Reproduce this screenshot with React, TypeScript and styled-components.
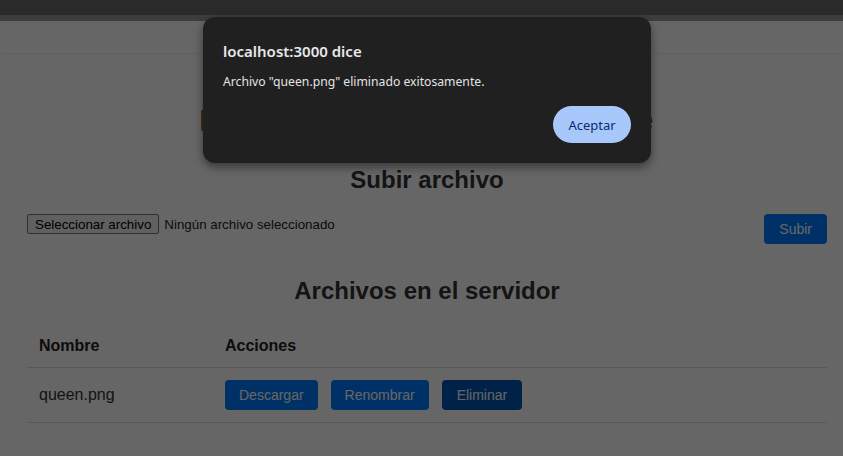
import React from "react";
import styled, { createGlobalStyle } from "styled-components";

const Global = createGlobalStyle`
  html, body { margin: 0; padding: 0; background: #ffffff; }
  body { font-family: "Liberation Sans", Arial, sans-serif; color: #333; }
  * { box-sizing: border-box; }
`;

const Chrome = styled.div`
  height: 15px;
  background: #2a2a2a;
`;

const ChromeEdge = styled.div`
  height: 6px;
  background: #3d3d3d;
`;

const Page = styled.div`
  position: relative;
  height: 435px;
  overflow: hidden;
  background: #ffffff;
`;

const TopStrip = styled.div`
  height: 32px;
  background: #ffffff;
  box-shadow: 0 1px 2px rgba(0, 0, 0, 0.06);
`;

const Container = styled.main`
  width: 800px;
  margin-left: 27px;
  display: flex;
  flex-direction: column;
`;

const Title = styled.h1`
  margin: 51px 0 0;
  height: 32px;
  display: flex;
  align-items: center;
  justify-content: center;
  gap: 10px;
  font-size: 29px;
  line-height: 32px;
  font-weight: 700;
  color: #2c3e50;
`;

const FolderIcon = () => (
  <svg width="28" height="24" viewBox="0 0 28 24" aria-hidden="true">
    <path d="M1 4a2 2 0 0 1 2-2h7l3 3h12a2 2 0 0 1 2 2v14a2 2 0 0 1-2 2H3a2 2 0 0 1-2-2z" fill="#d9a23a" stroke="#8a5a10" strokeWidth="1.5" />
  </svg>
);

const SectionTitle = styled.h2<{ $top: number }>`
  margin: ${(p) => p.$top}px 0 0;
  font-size: 24px;
  line-height: 28px;
  font-weight: 700;
  text-align: center;
  color: #333;
`;

const UploadRow = styled.div`
  margin-top: 20px;
  display: flex;
  justify-content: space-between;
  align-items: flex-start;
`;

const FileField = styled.div`
  display: flex;
  align-items: center;
  gap: 5px;
  font-size: 13.33px;
  color: #222;
`;

const FileButton = styled.span`
  display: inline-flex;
  align-items: center;
  height: 20px;
  padding: 0 7px;
  border: 1px solid #767676;
  border-radius: 2px;
  background: #efefef;
  color: #000;
  font-size: 13.33px;
`;

const Button = styled.button<{ $dark?: boolean; $px?: number }>`
  height: 30px;
  padding: 0 ${(p) => p.$px ?? 14}px;
  border: none;
  border-radius: 4px;
  background: ${(p) => (p.$dark ? "#0056b3" : "#007bff")};
  color: #ffffff;
  font-family: "Liberation Sans", Arial, sans-serif;
  font-size: 14px;
  cursor: pointer;
`;

const Table = styled.table`
  margin-top: 20px;
  width: 800px;
  border-collapse: collapse;
`;

const Th = styled.th<{ $w?: number }>`
  width: ${(p) => (p.$w ? `${p.$w}px` : "auto")};
  padding: 12px;
  text-align: left;
  font-size: 16px;
  font-weight: 700;
  color: #222;
  border-bottom: 1px solid #ddd;
`;

const Td = styled.td`
  padding: 12px;
  font-size: 16px;
  color: #333;
  border-bottom: 1px solid #ddd;
`;

const Actions = styled.div`
  display: flex;
  gap: 13px;
`;

const Scrim = styled.div`
  position: absolute;
  inset: 0;
  background: rgba(0, 0, 0, 0.6);
`;

const Dialog = styled.div`
  position: absolute;
  top: 17px;
  left: 203px;
  width: 448px;
  height: 146px;
  padding: 24px 20px 20px;
  border-radius: 12px;
  background: #202020;
  box-shadow: 0 4px 10px rgba(0, 0, 0, 0.45);
  display: flex;
  flex-direction: column;
  font-family: "Noto Sans", "Open Sans", sans-serif;
  color: #e3e3e3;
`;

const DialogTitle = styled.div`
  font-size: 15px;
  font-weight: 600;
  line-height: 20px;
  color: #e8e8e8;
`;

const DialogText = styled.div`
  margin-top: 13px;
  font-size: 12.2px;
  line-height: 16px;
  color: #e3e3e3;
`;

const DialogActions = styled.div`
  margin-top: auto;
  display: flex;
  justify-content: flex-end;
`;

const AcceptButton = styled.button`
  height: 37px;
  width: 78px;
  border: none;
  border-radius: 19px;
  background: #a8c7fa;
  color: #062e6f;
  font-family: "Noto Sans", "Open Sans", sans-serif;
  font-size: 13px;
`;

export default function App() {
  return (
    <>
      <Global />
      <Chrome />
      <ChromeEdge />
      <Page>
        <TopStrip />
        <Container>
          <Title>
            <FolderIcon />
            Gestor de archivos en la nube
          </Title>
          <SectionTitle $top={30}>Subir archivo</SectionTitle>
          <UploadRow>
            <FileField>
              <FileButton>Seleccionar archivo</FileButton>
              <span>Ningún archivo seleccionado</span>
            </FileField>
            <Button $px={15}>Subir</Button>
          </UploadRow>
          <SectionTitle $top={33}>Archivos en el servidor</SectionTitle>
          <Table>
            <thead>
              <tr>
                <Th $w={186}>Nombre</Th>
                <Th>Acciones</Th>
              </tr>
            </thead>
            <tbody>
              <tr>
                <Td>queen.png</Td>
                <Td>
                  <Actions>
                    <Button>Descargar</Button>
                    <Button>Renombrar</Button>
                    <Button $dark $px={15}>Eliminar</Button>
                  </Actions>
                </Td>
              </tr>
            </tbody>
          </Table>
        </Container>
        <Scrim />
      </Page>
      <Dialog role="alertdialog">
        <DialogTitle>localhost:3000 dice</DialogTitle>
        <DialogText>Archivo "queen.png" eliminado exitosamente.</DialogText>
        <DialogActions>
          <AcceptButton>Aceptar</AcceptButton>
        </DialogActions>
      </Dialog>
    </>
  );
}
